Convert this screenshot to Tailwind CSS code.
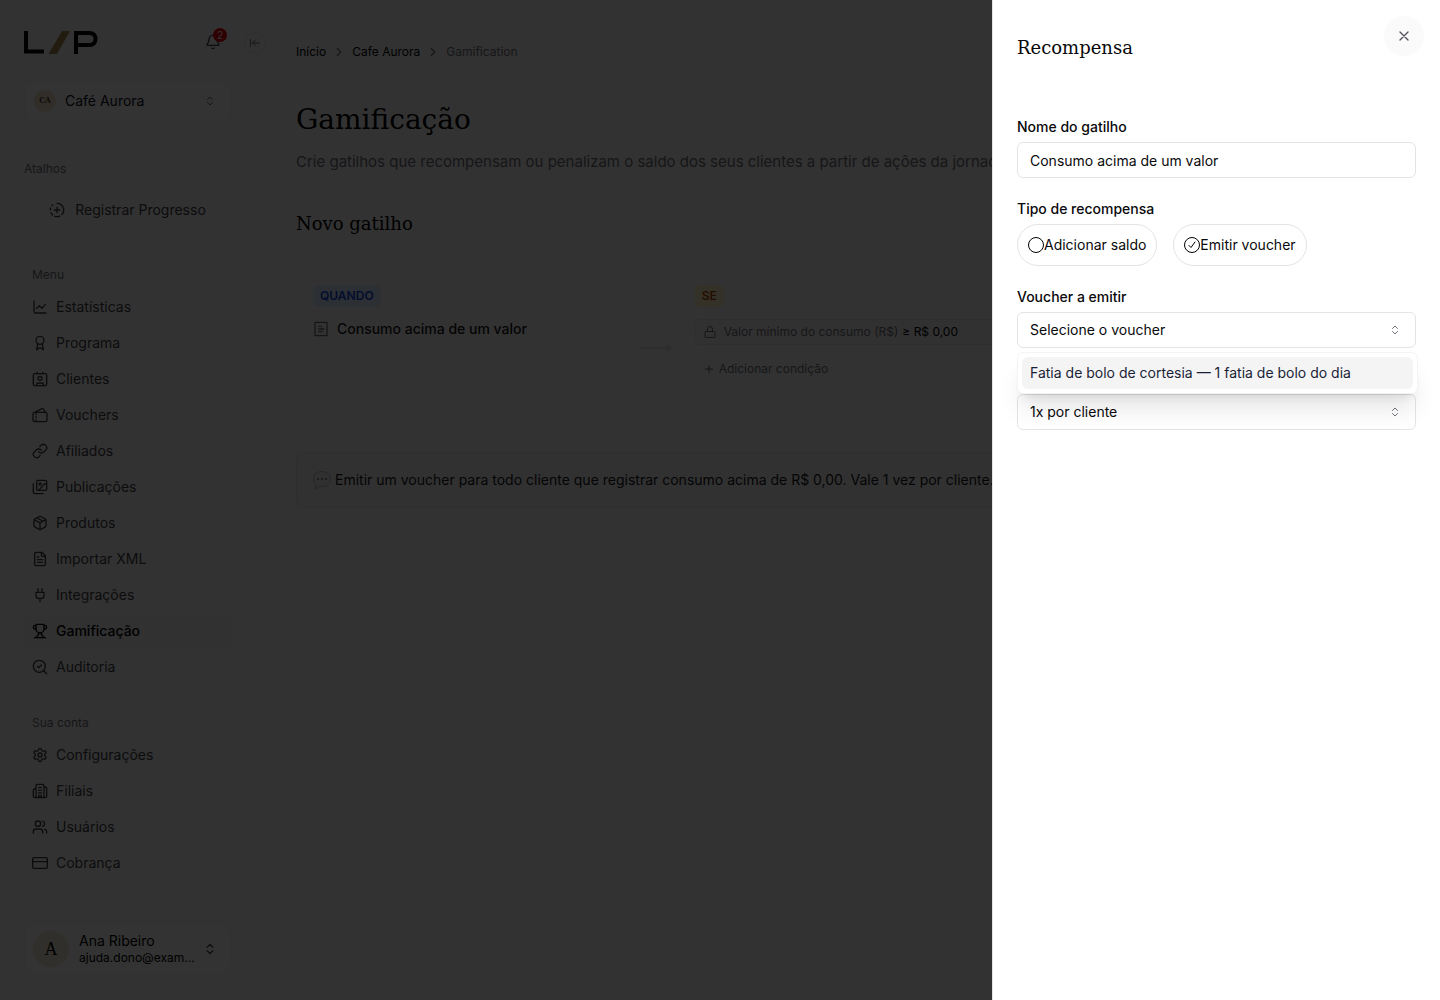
<!DOCTYPE html>
<html lang="pt-BR">
<head>
<meta charset="utf-8">
<title>Gamificação</title>
<script src="https://cdn.jsdelivr.net/npm/@tailwindcss/browser@4"></script>
</head>
<body class="min-h-screen overflow-x-hidden bg-[#fafafa] font-['Inter',sans-serif] text-sm text-black">
<svg class="hidden" aria-hidden="true">
  <symbol id="updown" viewBox="0 0 24 24"><path d="m7 15 5 5 5-5M7 9l5-5 5 5"/></symbol>
  <symbol id="right" viewBox="0 0 24 24"><path d="m9 18 6-6-6-6"/></symbol>
</svg>

<div class="flex min-h-screen">
  <aside class="relative flex w-64 shrink-0 flex-col border-r border-zinc-100 px-6 pt-[30px] pb-[25px]">
    <div class="flex h-6 items-center justify-between">
      <svg class="h-6 w-[75px]" viewBox="0 0 75 24" fill="none" role="img" aria-label="LP">
        <path d="M2 1v20.500h18" stroke="#000" stroke-width="4"/>
        <path d="M38 1h8L33 24h-8.500z" fill="#a58e4d"/>
        <path d="M52 24V3h13.500c4 0 6 2.500 6 6s-2 6-6 6H52" stroke="#000" stroke-width="4"/>
      </svg>
      <button class="relative mr-[10px] flex size-4 text-zinc-700" aria-label="Notificações">
        <svg class="size-4" viewBox="0 0 24 24" fill="none" stroke="currentColor" stroke-width="2" stroke-linecap="round" stroke-linejoin="round"><path d="M10.268 21a2 2 0 0 0 3.464 0"/><path d="M3.262 15.326A1 1 0 0 0 4 17h16a1 1 0 0 0 .74-1.673C19.410 13.956 18 12.499 18 8A6 6 0 0 0 6 8c0 4.499-1.411 5.956-2.738 7.326"/></svg>
        <span class="absolute -top-[6px] left-2 flex size-[14px] items-center justify-center rounded-full bg-red-600 text-[10px] leading-none text-white">2</span>
      </button>
    </div>
    <button class="absolute top-8 -right-[11px] flex size-[22px] items-center justify-center rounded-full border border-zinc-200 bg-[#fafafa] text-zinc-500" aria-label="Recolher menu">
      <svg class="size-3" viewBox="0 0 24 24" fill="none" stroke="currentColor" stroke-width="2" stroke-linecap="round" stroke-linejoin="round"><path d="M3 19V5M13 6l-6 6 6 6M7 12h14"/></svg>
    </button>

    <button class="mt-[27px] flex h-10 items-center rounded-lg border border-zinc-100 bg-white/50 pr-[14px] pl-[9px]">
      <span class="flex size-[22px] items-center justify-center rounded-full bg-[#f3e6d3] font-['Liberation_Serif',serif] text-[8px] font-bold text-[#4a2c1a]">CA</span>
      <span class="ml-[9px] text-[#0a0f1f]">Café Aurora</span>
      <svg class="ml-auto size-3 text-zinc-500" fill="none" stroke="currentColor" stroke-width="2" stroke-linecap="round" stroke-linejoin="round"><use href="#updown"/></svg>
    </button>

    <p class="mt-10 text-xs text-zinc-500">Atalhos</p>
    <a href="#" class="mt-[9px] flex h-12 items-center justify-center gap-[10px] rounded-lg border border-zinc-100 text-zinc-700">
      <svg class="size-4" viewBox="0 0 24 24" fill="none" stroke="currentColor" stroke-width="2" stroke-linecap="round" stroke-linejoin="round"><path d="M12 2a10 10 0 0 1 7.380 16.750M12 8v8M16 12H8M2.500 8.875a10 10 0 0 0-.5 3M2.830 16a10 10 0 0 0 2.430 3.400M4.636 5.235a10 10 0 0 1 .891-.857M8.644 21.420a10 10 0 0 0 7.631-.380"/></svg>
      Registrar Progresso
    </a>

    <nav class="mt-[33px] flex flex-col gap-1 text-zinc-700">
      <p class="mb-1 px-2 text-xs text-zinc-500">Menu</p>
      <a href="#" class="flex h-8 items-center gap-2 px-2"><svg class="size-4" viewBox="0 0 24 24" fill="none" stroke="currentColor" stroke-width="2" stroke-linecap="round" stroke-linejoin="round"><path d="M3 3v16a2 2 0 0 0 2 2h16M7 14l4-4 4 4 5-6"/></svg>Estatísticas</a>
      <a href="#" class="flex h-8 items-center gap-2 px-2"><svg class="size-4" viewBox="0 0 24 24" fill="none" stroke="currentColor" stroke-width="2" stroke-linecap="round" stroke-linejoin="round"><circle cx="12" cy="8" r="6"/><path d="m15.477 12.890 1.515 8.526a.5.5 0 0 1-.810.470l-3.580-2.687a1 1 0 0 0-1.197 0l-3.586 2.686a.5.5 0 0 1-.810-.469l1.514-8.526"/></svg>Programa</a>
      <a href="#" class="flex h-8 items-center gap-2 px-2"><svg class="size-4" viewBox="0 0 24 24" fill="none" stroke="currentColor" stroke-width="2" stroke-linecap="round" stroke-linejoin="round"><path d="M16 2v2M7 22v-2a2 2 0 0 1 2-2h6a2 2 0 0 1 2 2v2M8 2v2"/><circle cx="12" cy="11" r="3"/><rect x="2" y="4" width="20" height="18" rx="2"/></svg>Clientes</a>
      <a href="#" class="flex h-8 items-center gap-2 px-2"><svg class="size-4" viewBox="0 0 24 24" fill="none" stroke="currentColor" stroke-width="2" stroke-linecap="round" stroke-linejoin="round"><path d="m4 8 11-5.500a1.500 1.500 0 0 1 2 .5l3 5M6 10v1.500M6 14.500v1.500M6 19v1.500"/><rect x="1.500" y="8" width="21" height="14" rx="2.500"/></svg>Vouchers</a>
      <a href="#" class="flex h-8 items-center gap-2 px-2"><svg class="size-4" viewBox="0 0 24 24" fill="none" stroke="currentColor" stroke-width="2" stroke-linecap="round" stroke-linejoin="round"><path d="M10 13a5 5 0 0 0 7.540.540l3-3a5 5 0 0 0-7.070-7.070l-1.720 1.710"/><path d="M14 11a5 5 0 0 0-7.540-.540l-3 3a5 5 0 0 0 7.070 7.070l1.710-1.710"/></svg>Afiliados</a>
      <a href="#" class="flex h-8 items-center gap-2 px-2"><svg class="size-4" viewBox="0 0 24 24" fill="none" stroke="currentColor" stroke-width="2" stroke-linecap="round" stroke-linejoin="round"><path d="M17 22H4a2 2 0 0 1-2-2V7"/><path d="m22 8-3-1-9 10"/><circle cx="12" cy="7.500" r="1.500"/><rect x="7" y="2" width="15" height="15" rx="2"/></svg>Publicações</a>
      <a href="#" class="flex h-8 items-center gap-2 px-2"><svg class="size-4" viewBox="0 0 24 24" fill="none" stroke="currentColor" stroke-width="2" stroke-linecap="round" stroke-linejoin="round"><path d="M11 21.730a2 2 0 0 0 2 0l7-4A2 2 0 0 0 21 16V8a2 2 0 0 0-1-1.730l-7-4a2 2 0 0 0-2 0l-7 4A2 2 0 0 0 3 8v8a2 2 0 0 0 1 1.730zM12 22V12M3.290 7 12 12l8.710-5M7.500 4.270l9 5.150"/></svg>Produtos</a>
      <a href="#" class="flex h-8 items-center gap-2 px-2"><svg class="size-4" viewBox="0 0 24 24" fill="none" stroke="currentColor" stroke-width="2" stroke-linecap="round" stroke-linejoin="round"><path d="M15 2H6a2 2 0 0 0-2 2v16a2 2 0 0 0 2 2h12a2 2 0 0 0 2-2V7zM14 2v4a2 2 0 0 0 2 2h4M10 9H8M16 13H8M16 17H8"/></svg>Importar XML</a>
      <a href="#" class="flex h-8 items-center gap-2 px-2"><svg class="size-4" viewBox="0 0 24 24" fill="none" stroke="currentColor" stroke-width="2" stroke-linecap="round" stroke-linejoin="round"><path d="M12 22v-5M9 8V2M15 8V2M18 8v5a4 4 0 0 1-4 4h-4a4 4 0 0 1-4-4V8Z"/></svg>Integrações</a>
      <a href="#" class="flex h-8 items-center gap-2 rounded-md bg-zinc-100 px-2 font-medium text-black" aria-current="page"><svg class="size-4" viewBox="0 0 24 24" fill="none" stroke="currentColor" stroke-width="2" stroke-linecap="round" stroke-linejoin="round"><path d="M6 9H4.500a2.500 2.500 0 0 1 0-5H6M18 9h1.500a2.500 2.500 0 0 0 0-5H18M4 22h16M10 14.660V17c0 .550-.470.980-.970 1.210C7.850 18.750 7 20.240 7 22M14 14.660V17c0 .550.470.980.970 1.210C16.150 18.750 17 20.240 17 22M18 2H6v7a6 6 0 0 0 12 0V2Z"/></svg>Gamificação</a>
      <a href="#" class="flex h-8 items-center gap-2 px-2"><svg class="size-4" viewBox="0 0 24 24" fill="none" stroke="currentColor" stroke-width="2" stroke-linecap="round" stroke-linejoin="round"><path d="m8 11 2 2 4-4"/><circle cx="11" cy="11" r="9"/><path d="m22 22-4.500-4.500"/></svg>Auditoria</a>
    </nav>

    <nav class="mt-8 flex flex-col gap-1 text-zinc-700">
      <p class="mb-1 px-2 text-xs text-zinc-500">Sua conta</p>
      <a href="#" class="flex h-8 items-center gap-2 px-2"><svg class="size-4" viewBox="0 0 24 24" fill="none" stroke="currentColor" stroke-width="2" stroke-linecap="round" stroke-linejoin="round"><path d="M9.671 4.136a2.340 2.340 0 0 1 4.659 0 2.340 2.340 0 0 0 3.319 1.915 2.340 2.340 0 0 1 2.330 4.033 2.340 2.340 0 0 0 0 3.831 2.340 2.340 0 0 1-2.330 4.033 2.340 2.340 0 0 0-3.319 1.915 2.340 2.340 0 0 1-4.659 0 2.340 2.340 0 0 0-3.320-1.915 2.340 2.340 0 0 1-2.330-4.033 2.340 2.340 0 0 0 0-3.831A2.340 2.340 0 0 1 6.350 6.051a2.340 2.340 0 0 0 3.319-1.915"/><circle cx="12" cy="12" r="3"/></svg>Configurações</a>
      <a href="#" class="flex h-8 items-center gap-2 px-2"><svg class="size-4" viewBox="0 0 24 24" fill="none" stroke="currentColor" stroke-width="2" stroke-linecap="round" stroke-linejoin="round"><path d="M6 22V4a2 2 0 0 1 2-2h8a2 2 0 0 1 2 2v18M6 9H4a2 2 0 0 0-2 2v9a2 2 0 0 0 2 2h16a2 2 0 0 0 2-2V8a2 2 0 0 0-2-2h-2M10 7h4M10 11h4M10 15h4M10 22v-3h4v3"/></svg>Filiais</a>
      <a href="#" class="flex h-8 items-center gap-2 px-2"><svg class="size-4" viewBox="0 0 24 24" fill="none" stroke="currentColor" stroke-width="2" stroke-linecap="round" stroke-linejoin="round"><path d="M16 21v-2a4 4 0 0 0-4-4H6a4 4 0 0 0-4 4v2M16 3.128a4 4 0 0 1 0 7.744M22 21v-2a4 4 0 0 0-3-3.870"/><circle cx="9" cy="7" r="4"/></svg>Usuários</a>
      <a href="#" class="flex h-8 items-center gap-2 px-2"><svg class="size-4" viewBox="0 0 24 24" fill="none" stroke="currentColor" stroke-width="2" stroke-linecap="round" stroke-linejoin="round"><rect x="1" y="4" width="22" height="16" rx="2"/><path d="M1 10h22"/></svg>Cobrança</a>
    </nav>

    <button class="mt-auto flex h-[52px] items-center rounded-xl border border-zinc-100 bg-white/50 pr-[13px] pl-2 text-left">
      <span class="flex size-9 shrink-0 items-center justify-center rounded-full bg-[#f5ecd7] font-['Liberation_Serif',serif] text-lg">A</span>
      <span class="ml-[10px] whitespace-nowrap">
        <span class="block leading-[18px]">Ana Ribeiro</span>
        <span class="block text-xs">ajuda.dono@exam...</span>
      </span>
      <svg class="ml-auto size-[14px] shrink-0 text-zinc-700" fill="none" stroke="currentColor" stroke-width="2" stroke-linecap="round" stroke-linejoin="round"><use href="#updown"/></svg>
    </button>
  </aside>

  <main class="min-w-0 flex-1 px-10 pt-11">
    <nav class="flex items-center gap-[6px] text-xs" aria-label="Trilha">
      <a href="#">Início</a>
      <svg class="size-[14px] text-zinc-500" fill="none" stroke="currentColor" stroke-width="2" stroke-linecap="round" stroke-linejoin="round"><use href="#right"/></svg>
      <a href="#">Cafe Aurora</a>
      <svg class="size-[14px] text-zinc-500" fill="none" stroke="currentColor" stroke-width="2" stroke-linecap="round" stroke-linejoin="round"><use href="#right"/></svg>
      <span class="text-zinc-500">Gamification</span>
    </nav>
    <h1 class="mt-10 font-['DejaVu_Serif',serif] text-[28px] leading-10">Gamificação</h1>
    <p class="mt-[10px] text-[15px] leading-6 whitespace-nowrap text-zinc-500">Crie gatilhos que recompensam ou penalizam o saldo dos seus clientes a partir de ações da jornada.</p>
    <h2 class="mt-[34px] font-['DejaVu_Serif',serif] text-lg leading-8">Novo gatilho</h2>

    <div class="mt-7 grid grid-cols-[1fr_41px_1fr_41px_1fr]">
      <section class="h-[159px] rounded-2xl border border-zinc-100 p-4">
        <span class="flex h-[22px] w-fit items-center rounded-md bg-blue-100 px-[7px] text-xs font-semibold text-blue-700">QUANDO</span>
        <p class="mt-3 flex items-center gap-2 font-medium text-zinc-900">
          <svg class="size-4 text-zinc-500" viewBox="0 0 24 24" fill="none" stroke="currentColor" stroke-width="2" stroke-linejoin="round"><path d="M3 2h18v20H3zM8 8h5M8 12h9M8 16h7"/><path d="M6 2v1M10 2v1M14 2v1M18 2v1M6 21v1M10 21v1M14 21v1M18 21v1"/></svg>
          Consumo acima de um valor
        </p>
      </section>
      <svg class="w-full self-center text-zinc-200" viewBox="0 0 41 10" fill="currentColor"><path d="M4 4h25V1l8 4-8 4V6H4z"/></svg>
      <section class="h-[159px] rounded-2xl border border-zinc-100 p-4">
        <span class="flex h-[22px] w-fit items-center rounded-md bg-amber-100 px-[7px] text-xs font-semibold text-amber-700">SE</span>
        <p class="mt-3 flex h-[26px] items-center rounded-md border border-zinc-200 bg-zinc-100 px-2 text-xs text-zinc-500">
          <svg class="mr-2 size-3" viewBox="0 0 24 24" fill="none" stroke="currentColor" stroke-width="2" stroke-linecap="round" stroke-linejoin="round"><rect x="2" y="11" width="20" height="12" rx="2"/><path d="M7 11V6a5 5 0 0 1 10 0v5"/></svg>
          Valor mínimo do consumo (R$)<span class="ml-1 text-black">≥ R$ 0,00</span>
        </p>
        <button class="mt-[10px] flex h-7 items-center gap-1 px-2 text-xs text-zinc-500">
          <svg class="size-3" viewBox="0 0 24 24" fill="none" stroke="currentColor" stroke-width="2" stroke-linecap="round"><path d="M5 12h14M12 5v14"/></svg>
          Adicionar condição
        </button>
      </section>
      <span></span>
      <section class="rounded-2xl border border-zinc-100"></section>
    </div>

    <div class="mt-[25px] flex h-14 items-center gap-1 rounded-lg border border-zinc-200 bg-zinc-100 px-4">
      <svg class="size-[18px]" viewBox="0 0 18 18"><path d="M9 .5c5 0 8.500 3 8.500 7.500S14 15.500 9 15.500c-1 0-2-.1-2.800-.4C5 16.500 3.500 17.300 2 17.500c.6-1 .9-2.200.8-3.500C1.300 12.500.5 10.500.5 8 .5 3.500 4 .5 9 .5z" fill="#eee" stroke="#bbb"/><path d="M5 8h.1M9 8h.1M13 8h.1" stroke="#777" stroke-width="2" stroke-linecap="round"/></svg>
      <p class="whitespace-nowrap text-zinc-900">Emitir um voucher para todo cliente que registrar consumo acima de R$ 0,00. Vale 1 vez por cliente.</p>
    </div>
  </main>
</div>

<div class="fixed inset-0 bg-black/80"></div>

<div role="dialog" aria-modal="true" aria-labelledby="panel-title" class="fixed inset-y-0 right-0 w-full max-w-md border-l border-zinc-200 bg-white px-6 pt-8">
  <button class="absolute top-4 right-4 flex size-10 items-center justify-center rounded-full bg-[#fafafa] text-zinc-600" aria-label="Fechar">
    <svg class="size-4" viewBox="0 0 24 24" fill="none" stroke="currentColor" stroke-width="2" stroke-linecap="round"><path d="M18 6 6 18M6 6l12 12"/></svg>
  </button>
  <h2 id="panel-title" class="font-['DejaVu_Serif',serif] text-lg leading-8 text-zinc-950">Recompensa</h2>
  <form class="mt-[52px] flex flex-col gap-5 text-zinc-950">
    <div class="flex flex-col gap-1">
      <label for="nome" class="leading-[22px] font-medium">Nome do gatilho</label>
      <input id="nome" type="text" value="Consumo acima de um valor" class="h-9 rounded-md border border-zinc-200 px-3">
    </div>
    <fieldset>
      <legend class="mb-1 leading-[22px] font-medium">Tipo de recompensa</legend>
      <div class="flex gap-4">
        <label class="flex h-[42px] items-center rounded-full border border-zinc-200 px-[10px]"><input type="radio" name="tipo" class="size-4 appearance-none rounded-full border border-black">Adicionar saldo</label>
        <label class="flex h-[42px] items-center rounded-full border border-zinc-200 px-[10px]">
          <span class="grid size-4">
            <input type="radio" name="tipo" checked class="col-start-1 row-start-1 size-4 appearance-none rounded-full border border-black">
            <svg class="pointer-events-none col-start-1 row-start-1 size-4" viewBox="0 0 16 16" fill="none" stroke="#000" stroke-linecap="round" stroke-linejoin="round"><path d="m5 8.500 2 2L11 5"/></svg>
          </span>Emitir voucher</label>
      </div>
    </fieldset>
    <div class="relative flex flex-col gap-1">
      <label for="voucher" class="leading-[22px] font-medium">Voucher a emitir</label>
      <div class="grid items-center">
        <select id="voucher" class="col-start-1 row-start-1 h-9 appearance-none rounded-md border border-zinc-200 bg-white px-3"><option>Selecione o voucher</option></select>
        <svg class="pointer-events-none col-start-1 row-start-1 mr-[15px] size-3 justify-self-end text-zinc-500" fill="none" stroke="currentColor" stroke-width="2" stroke-linecap="round" stroke-linejoin="round"><use href="#updown"/></svg>
      </div>
      <ul role="listbox" aria-label="Vouchers" class="absolute top-full -right-0.5 left-0 z-10 mt-1 rounded-md border border-zinc-100 bg-white p-1 shadow-xl">
        <li role="option" aria-selected="true" class="flex h-8 items-center rounded-md bg-zinc-100 px-2 text-[#1a1f36]">Fatia de bolo de cortesia — 1 fatia de bolo do dia</li>
      </ul>
    </div>
    <div class="grid items-center pt-[26px]">
      <select aria-label="Limite" class="col-start-1 row-start-1 h-9 appearance-none rounded-md border border-zinc-200 bg-white px-3"><option>1x por cliente</option></select>
      <svg class="pointer-events-none col-start-1 row-start-1 mr-[15px] size-3 justify-self-end text-zinc-500" fill="none" stroke="currentColor" stroke-width="2" stroke-linecap="round" stroke-linejoin="round"><use href="#updown"/></svg>
    </div>
  </form>
</div>
</body>
</html>
